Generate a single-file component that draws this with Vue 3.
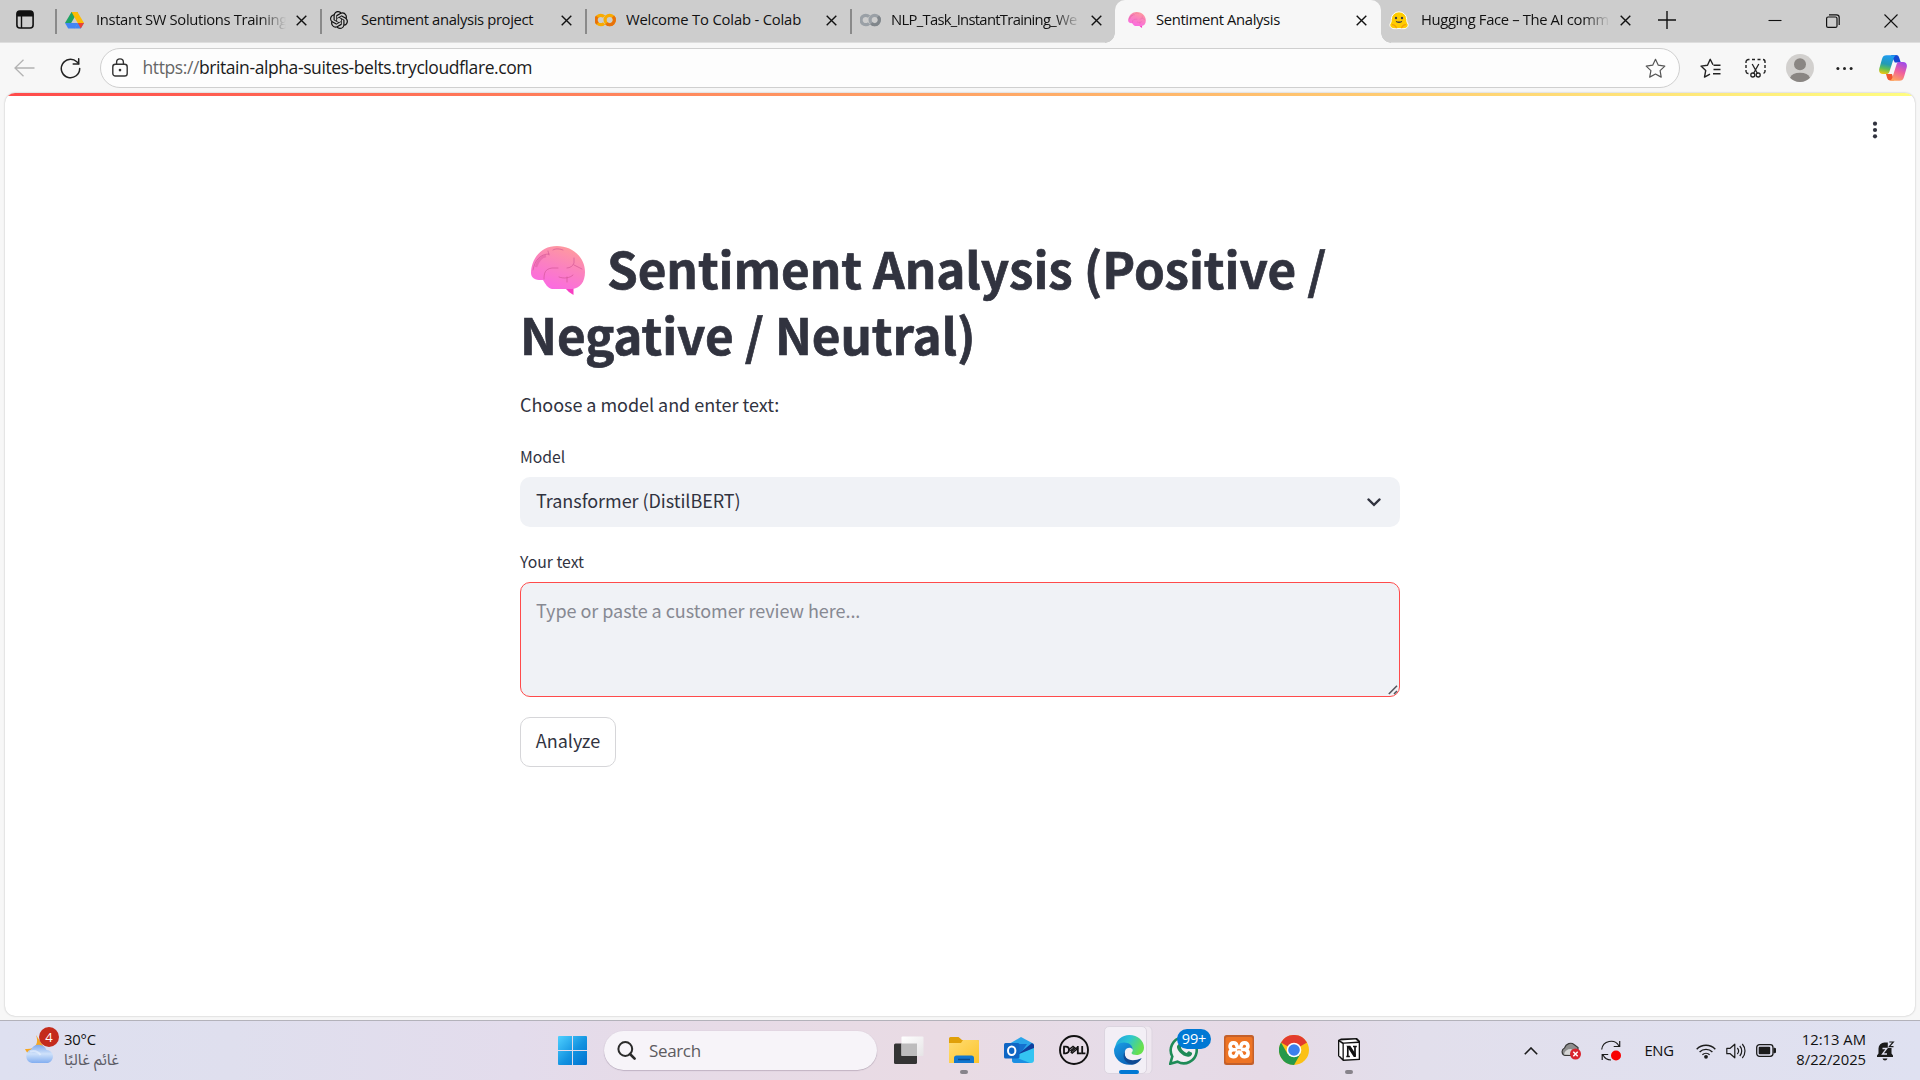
<script setup>
import { ref } from 'vue'

const tabs = [
  { title: 'Instant SW Solutions Training', icon: 'drive', fade: true },
  { title: 'Sentiment analysis project', icon: 'openai' },
  { title: 'Welcome To Colab - Colab', icon: 'colab', wide: true },
  { title: 'NLP_Task_InstantTraining_We', icon: 'colab-grey', fade: true, tight: true },
  { title: 'Sentiment Analysis', icon: 'brain', active: true },
  { title: 'Hugging Face – The AI comm', icon: 'hugging', fade: true },
]

const apps = [
  { icon: 'explorer', dot: true },
  { icon: 'outlook' },
  { icon: 'dell' },
  { icon: 'edge', active: true },
  { icon: 'whatsapp', badge: '99+' },
  { icon: 'xampp' },
  { icon: 'chrome' },
  { icon: 'notion', dot: true },
]

const review = ref('')
</script>

<template>
  <div class="screen">
    <svg class="defs" width="0" height="0" aria-hidden="true">
      <defs>
        <linearGradient id="brainFill" x1="0.75" y1="0" x2="0.3" y2="1">
          <stop offset="0" stop-color="#ff9c9b" /><stop offset="0.45" stop-color="#fb83bd" /><stop offset="1" stop-color="#fb68e4" />
        </linearGradient>
        <linearGradient id="winFill" x1="0" y1="0" x2="1" y2="1">
          <stop offset="0" stop-color="#4fd0ff" /><stop offset="0.55" stop-color="#1292e0" /><stop offset="1" stop-color="#0070cf" />
        </linearGradient>
        <linearGradient id="cloudFill" x1="0" y1="0" x2="0" y2="1">
          <stop offset="0" stop-color="#7fa9ec" /><stop offset="0.5" stop-color="#cfe1fa" /><stop offset="1" stop-color="#82aef0" />
        </linearGradient>
        <linearGradient id="folderFill" x1="0" y1="0" x2="1" y2="1">
          <stop offset="0" stop-color="#ffdc72" /><stop offset="1" stop-color="#fcc42c" />
        </linearGradient>
        <linearGradient id="edgeTop" x1="0" y1="0" x2="1" y2="0.4">
          <stop offset="0" stop-color="#1f9de0" /><stop offset="0.5" stop-color="#2cc5d2" /><stop offset="1" stop-color="#68e04e" />
        </linearGradient>
        <linearGradient id="edgeLeft" x1="0" y1="0" x2="0.6" y2="1">
          <stop offset="0" stop-color="#1aa0e6" /><stop offset="1" stop-color="#0c63b8" />
        </linearGradient>
        <linearGradient id="cpLeft" x1="0.4" y1="0" x2="0.2" y2="1">
          <stop offset="0" stop-color="#1f9cf0" /><stop offset="0.45" stop-color="#239bb4" /><stop offset="0.7" stop-color="#5fbf56" /><stop offset="1" stop-color="#f7c70e" />
        </linearGradient>
        <linearGradient id="cpRight" x1="0.7" y1="0" x2="0.3" y2="1">
          <stop offset="0" stop-color="#a14be8" /><stop offset="0.5" stop-color="#f1609c" /><stop offset="1" stop-color="#ffa65c" />
        </linearGradient>
        <linearGradient id="paneFill" x1="0" y1="0" x2="1" y2="1">
          <stop offset="0" stop-color="#ffffff" /><stop offset="1" stop-color="#e6e4e6" />
        </linearGradient>
        <symbol id="i-brain" viewBox="0 0 54 49">
          <path d="M35 42h7.500v7Q37.500 46.500 34 42z" fill="#f83ec2" />
          <path d="M0 27C0 14 9 0 26 0c14 0 28 10 28 26 0 10-5 16.500-13 17H21c-4.500-1-6.500-5-9-9C6 34.500 0 33 0 27z" fill="url(#brainFill)" />
          <g fill="none" stroke="#cf5291" stroke-width="1" stroke-linecap="round" opacity="0.62">
            <path d="M2 24C4 14 9 8 18 8M13 33c0-6 1-10 8-11h6M22 4c3-2 7-1 10 0M36 22c3 0 6-2 7-5v-5M43 19l8 4M28 31c5 2 11 1 14-2M36 31v5M17 5l1 4" />
          </g>
          <path d="M5 21c2-7 5-10 10-11" fill="none" stroke="#d6569c" stroke-width="2.500" opacity="0.45" />
        </symbol>
      </defs>
    </svg>

    <!-- Tab strip -->
    <header class="tabstrip">
      <div class="tab-actions">
        <svg width="18" height="19" viewBox="0 0 18 19"><rect x="0.900" y="1" width="16.200" height="17" rx="3" fill="none" stroke="#111" stroke-width="1.600" /><path d="M1 4a3 3 0 0 1 3-3h10a3 3 0 0 1 3 3v2.500H1z" fill="#111" /><path d="M5.500 6v12" stroke="#111" stroke-width="1.400" /></svg>
      </div>
      <div v-for="t in tabs" :key="t.title" class="tab" :class="{ active: t.active }">
        <span class="favicon">
          <svg v-if="t.icon === 'drive'" width="19" height="17" viewBox="0 0 19 17"><path d="M6.500 0h6L6.200 11H0z" fill="#1ea362" /><path d="M6.500 0h6L9.500 5.300z" fill="#188038" /><path d="M6.500 0h6L19 11h-6.300z" fill="#fbbc04" /><path d="M3.200 16.500 0 11h13l-3.200 5.500z" fill="#4285f4" /><path d="M12.700 11H19l-3.200 5.500H9.500z" fill="#4285f4" /><path d="M12.700 11H19l-3.200 5.500z" fill="#ea4335" /></svg>
          <svg v-else-if="t.icon === 'openai'" width="18" height="18" viewBox="0 0 24 24"><path fill="#111" d="M22.280 9.820a5.980 5.980 0 0 0-.520-4.910 6.050 6.050 0 0 0-6.510-2.900A6.070 6.070 0 0 0 4.980 4.180a5.980 5.980 0 0 0-4 2.900 6.050 6.050 0 0 0 .740 7.100 5.980 5.980 0 0 0 .510 4.910 6.050 6.050 0 0 0 6.510 2.900A5.980 5.980 0 0 0 13.260 24a6.060 6.060 0 0 0 5.770-4.210 5.990 5.990 0 0 0 4-2.900 6.060 6.060 0 0 0-.750-7.070zm-9.020 12.610a4.480 4.480 0 0 1-2.880-1.040l.140-.080 4.780-2.760a.800.800 0 0 0 .390-.680v-6.740l2.020 1.170a.070.070 0 0 1 .040.050v5.580a4.500 4.500 0 0 1-4.490 4.490zm-9.660-4.130a4.470 4.470 0 0 1-.530-3.010l.140.090 4.780 2.760a.770.770 0 0 0 .780 0l5.840-3.370v2.330a.080.080 0 0 1-.030.060L9.740 19.950a4.500 4.500 0 0 1-6.140-1.650zM2.340 7.900a4.490 4.490 0 0 1 2.370-1.970v5.680a.770.770 0 0 0 .390.680l5.810 3.350-2.020 1.170a.080.080 0 0 1-.070 0l-4.830-2.790A4.500 4.500 0 0 1 2.340 7.900zm16.600 3.860-5.840-3.390 2.020-1.160a.080.080 0 0 1 .070 0l4.830 2.790a4.490 4.490 0 0 1-.680 8.100v-5.680a.790.790 0 0 0-.400-.660zm2.010-3.020-.140-.090-4.770-2.780a.780.780 0 0 0-.790 0L9.410 9.230V6.900a.070.070 0 0 1 .030-.060l4.830-2.790a4.500 4.500 0 0 1 6.680 4.690zM8.310 12.860l-2.020-1.160a.080.080 0 0 1-.040-.060V6.070a4.500 4.500 0 0 1 7.380-3.450l-.140.080-4.780 2.760a.800.800 0 0 0-.390.680zm1.100-2.370L12.010 9l2.610 1.500v3l-2.600 1.500-2.610-1.500z" /></svg>
          <svg v-else-if="t.icon === 'colab'" width="21" height="14" viewBox="0 0 21 14"><path d="M9.100 3.700A4.700 4.700 0 1 0 9.100 10.300" fill="none" stroke="#f9ab00" stroke-width="3.200" /><circle cx="14.700" cy="7" r="4.600" fill="none" stroke="#f9ab00" stroke-width="3.200" /><path d="M11.400 10.300A4.600 4.600 0 0 0 18 3.700" fill="none" stroke="#e8710a" stroke-width="3.200" /><path d="M2.500 10.300A4.700 4.700 0 0 1 2.200 3.800" fill="none" stroke="#e8710a" stroke-width="3.200" /></svg>
          <svg v-else-if="t.icon === 'colab-grey'" width="21" height="14" viewBox="0 0 21 14"><path d="M9.100 3.700A4.700 4.700 0 1 0 9.100 10.300" fill="none" stroke="#9aa0a6" stroke-width="3.200" /><circle cx="14.700" cy="7" r="4.600" fill="none" stroke="#9aa0a6" stroke-width="3.200" /><path d="M11.400 10.300A4.600 4.600 0 0 0 18 3.700" fill="none" stroke="#80868b" stroke-width="3.200" /></svg>
          <svg v-else-if="t.icon === 'brain'" width="18" height="16"><use href="#i-brain" /></svg>
          <svg v-else width="20" height="19" viewBox="0 0 20 19"><path d="M2.300 8.500a7.700 7.700 0 0 1 15.400 0c0 2 .3 3 1.300 4.500.7 2-1 4.500-4 4.700-2 .3-3-.2-5-.2s-3 .5-5 .2c-3-.2-4.700-2.700-4-4.700 1-1.500 1.300-2.500 1.300-4.500z" fill="#fc0" stroke="#fff" stroke-width="1" /><path d="M3 14c1-1 4 1 4.500 3M17 14c-1-1-4 1-4.500 3" stroke="#f59e0b" stroke-width="1.300" fill="none" /><circle cx="7" cy="7" r="1.200" fill="#3a3b45" /><circle cx="13" cy="7" r="1.200" fill="#3a3b45" /><path d="M6.800 9.700q3.200 1.700 6.400 0c0 3-6.400 3-6.400 0z" fill="#3a3b45" /></svg>
        </span>
        <span class="tab-title" :class="{ fade: t.fade, wide: t.wide, tight: t.tight }">{{ t.title }}</span>
        <svg class="tab-close" width="11" height="11" viewBox="0 0 11 11"><path d="M0.700.700l9.600 9.600M10.300.700.700 10.300" stroke="#111" stroke-width="1.400" /></svg>
      </div>
      <svg class="new-tab" width="18" height="18" viewBox="0 0 18 18"><path d="M9 0v18M0 9h18" stroke="#111" stroke-width="1.400" /></svg>
      <div class="window-buttons">
        <svg width="14" height="14" viewBox="0 0 14 14"><path d="M0.500 6.500h13" stroke="#111" stroke-width="1.100" /></svg>
        <svg width="14" height="14" viewBox="0 0 14 14"><rect x="0.600" y="3" width="10.400" height="10.400" rx="1.500" fill="none" stroke="#111" stroke-width="1.200" /><path d="M3 .800h7.500a2.700 2.700 0 0 1 2.700 2.700V11" fill="none" stroke="#111" stroke-width="1.200" /></svg>
        <svg width="14" height="14" viewBox="0 0 14 14"><path d="M.5.500l13 13M13.500.500l-13 13" stroke="#111" stroke-width="1.100" /></svg>
      </div>
    </header>

    <!-- Address bar -->
    <nav class="toolbar">
      <svg class="back" width="21" height="18" viewBox="0 0 21 18"><path d="M20.500 9H1M9.500.700 1 9l8.500 8.300" fill="none" stroke="#b3b3b3" stroke-width="1.300" /></svg>
      <svg class="reload" width="21" height="21" viewBox="0 0 21 21"><path d="M19.700 10.500a9.200 9.200 0 1 1-2.900-6.700l1.700 1.700" fill="none" stroke="#222" stroke-width="1.500" stroke-linecap="round" /><path d="M18.700.800v5.200h-5.500" fill="none" stroke="#222" stroke-width="1.500" stroke-linecap="round" /></svg>
      <div class="omnibox">
        <svg class="lock" width="16" height="19" viewBox="0 0 16 19"><rect x="0.800" y="6.300" width="14.400" height="11.700" rx="2.600" fill="none" stroke="#333" stroke-width="1.400" /><path d="M4.600 6V4.300a3.400 3.400 0 0 1 6.800 0V6" fill="none" stroke="#333" stroke-width="1.400" /><circle cx="8" cy="12.100" r="1.300" fill="#333" /></svg>
        <span class="url"><i>https://</i>britain-alpha-suites-belts.trycloudflare.com</span>
        <svg class="star" width="21" height="21" viewBox="0 0 21 21"><path d="M10.500 1.300l2.800 5.900 6.500.9-4.700 4.500 1.100 6.500-5.700-3.100-5.800 3.100 1.200-6.500L1.200 8.100l6.500-.9z" fill="none" stroke="#555" stroke-width="1.200" stroke-linejoin="round" /></svg>
      </div>
      <div class="tools">
        <svg width="21" height="21" viewBox="0 0 21 21"><path d="M13 6.800 10.200 1.300 7.500 7.200 1 8.100l4.700 4.500-1.200 6.500 5.500-3" fill="none" stroke="#222" stroke-width="1.400" stroke-linejoin="round" /><path d="M13.500 7.200h7M13.500 11.500h7M13 15.800h7.500" stroke="#222" stroke-width="1.400" /></svg>
        <svg width="21" height="21" viewBox="0 0 21 21"><path d="M1 5V4a2.500 2.500 0 0 1 2.500-2.500h1M7 1.500h3M12.500 1.500h3M18 1.500a2.300 2.300 0 0 1 2 2.500v1M20 7v3M20 12v1.500a2 2 0 0 1-1.500 1.800M1 7v3M1 12v1.500A2.300 2.300 0 0 0 3.500 15.500" fill="none" stroke="#222" stroke-width="1.400" /><path d="M7.200 6l5.300 9.500M13.800 6l-5.300 9.500" stroke="#222" stroke-width="1.300" /><circle cx="7.800" cy="17" r="2" fill="none" stroke="#222" stroke-width="1.300" /><circle cx="13.200" cy="17" r="2" fill="none" stroke="#222" stroke-width="1.300" /></svg>
        <svg width="28" height="28" viewBox="0 0 28 28"><circle cx="14" cy="14" r="14" fill="#d2d0ce" /><circle cx="14" cy="10.300" r="6" fill="#8a8683" /><path d="M4 23.800a10.400 7 0 0 1 20 0 14 14 0 0 1-20 0z" fill="#8a8683" /></svg>
        <svg width="17" height="5" viewBox="0 0 17 5"><circle cx="1.900" cy="2.500" r="1.500" fill="#222" /><circle cx="8.500" cy="2.500" r="1.500" fill="#222" /><circle cx="15.100" cy="2.500" r="1.500" fill="#222" /></svg>
        <svg width="28" height="26" viewBox="0 0 28 26"><path d="M17 0c2 0 2.700 1 3.300 3l1.500 4.500h-6L12 0z" fill="#1748d2" /><path d="M7 19h6l2 6.500h-3.500c-2 0-3-1-3.500-3z" fill="#f0562f" /><path d="M7.500.300h10C15 1 14.700 3 14 5.500l-3.500 11C9.800 18.500 9 19 7 19H4C1 19-.5 17 .3 13.500L3 4C3.800 1.200 5.200.300 7.500.300z" fill="url(#cpLeft)" /><path d="M20.500 25.700h-10c2.500-.7 2.800-2.700 3.500-5.200l3.500-11c.7-2 1.500-2.500 3.500-2.500h3c3 0 4.500 2 3.700 5.500L25 22c-.8 2.800-2.200 3.700-4.500 3.700z" fill="url(#cpRight)" /></svg>
      </div>
    </nav>

    <!-- Page -->
    <div class="viewport">
      <main class="page">
        <div class="decoration"></div>
        <svg class="kebab" width="6" height="18" viewBox="0 0 6 18"><circle cx="3" cy="2.700" r="2.100" fill="#31333f" /><circle cx="3" cy="9" r="2.100" fill="#31333f" /><circle cx="3" cy="15.300" r="2.100" fill="#31333f" /></svg>
        <section class="content">
          <h1>
            <span class="line line-1"><svg class="brain" width="54" height="49"><use href="#i-brain" /></svg>Sentiment Analysis (Positive /</span>
            <span class="line line-2">Negative / Neutral)</span>
          </h1>
          <p class="intro">Choose a model and enter text:</p>
          <label class="label">Model</label>
          <div class="select">
            <span>Transformer (DistilBERT)</span>
            <svg width="14" height="9" viewBox="0 0 14 9"><path d="M1.400 1.400 7 6.900l5.600-5.500" fill="none" stroke="#31333f" stroke-width="2.200" stroke-linecap="round" /></svg>
          </div>
          <label class="label second">Your text</label>
          <div class="field">
            <textarea v-model="review" placeholder="Type or paste a customer review here..."></textarea>
            <svg class="grip" width="10" height="10" viewBox="0 0 10 10"><path d="M.8 9 9 .8M6 9l3-3" stroke="#55565c" stroke-width="1.600" /></svg>
          </div>
          <button class="analyze">Analyze</button>
        </section>
      </main>
    </div>

    <!-- Taskbar -->
    <footer class="taskbar">
      <div class="weather">
        <div class="weather-icon">
          <svg width="32" height="30" viewBox="0 0 32 30"><path d="M12 1c3 8 0 15-11 14 2 5 6 6 11 5l9-5z" fill="#f5a623" /><path d="M8 29a7 7 0 0 1-1-13.500A8.500 8.500 0 0 1 22.500 16 6.600 6.600 0 0 1 24 29z" fill="url(#cloudFill)" /><path d="M6 17.500q7-2 10.500 3.500" fill="none" stroke="#f2f7ff" stroke-width="2" opacity="0.5" /></svg>
          <span class="count">4</span>
        </div>
        <div class="weather-text"><span class="temp">30°C</span><span class="cond" dir="rtl">غائم غالبًا</span></div>
      </div>

      <svg class="start" width="29" height="29" viewBox="0 0 29 29"><path d="M1 0h13v14H0V1a1 1 0 0 1 1-1zM15 0h13a1 1 0 0 1 1 1v13H15zM0 15h14v14H1a1 1 0 0 1-1-1zM15 15h14v13a1 1 0 0 1-1 1H15z" fill="url(#winFill)" /></svg>
      <div class="search">
        <svg width="19" height="19" viewBox="0 0 19 19"><circle cx="8.300" cy="8" r="6.900" fill="none" stroke="#2b2b2b" stroke-width="2" /><path d="M13 13l4.600 4.600" stroke="#2b2b2b" stroke-width="2.600" stroke-linecap="round" /></svg>
        <span>Search</span>
      </div>
      <svg class="taskview" width="30" height="29" viewBox="0 0 30 29"><rect x="0" y="7.500" width="23" height="20.500" rx="1.500" fill="#343434" /><rect x="7.500" y="0.500" width="22" height="19.500" rx="1" fill="url(#paneFill)" /><rect x="7.500" y="7.500" width="15.500" height="12.500" fill="#bdbcbd" /></svg>

      <div class="apps">
        <div v-for="a in apps" :key="a.icon" class="app" :class="{ active: a.active }">
          <svg v-if="a.icon === 'explorer'" width="30" height="30" viewBox="0 0 30 30"><path d="M0 3.500A1.500 1.500 0 0 1 1.500 2h8L13 5h15.500A1.500 1.500 0 0 1 30 6.500V12H0z" fill="#e0a008" /><path d="M0 8h12l2-3h14.500A1.500 1.500 0 0 1 30 6.500V28H0z" fill="url(#folderFill)" /><path d="M5 28v-5a2.500 2.500 0 0 1 2.500-2.500h15A2.500 2.500 0 0 1 25 23v5z" fill="#1277cf" /><path d="M9 24.500h12" stroke="#0a4b8c" stroke-width="1.500" /></svg>
          <svg v-else-if="a.icon === 'outlook'" width="30" height="30" viewBox="0 0 30 30"><path d="M5 9 17 2l13 7v4L10 22z" fill="#2aa5ea" /><path d="M8 9h15l-9 13H8z" fill="#1470cf" /><path d="M12 21 28 8l2 2v7L14 26z" fill="#123f9c" /><path d="M8 22 30 13v12a3 3 0 0 1-3 3H11a3 3 0 0 1-3-3z" fill="#34c4f2" /><path d="M8 21l18 7H11a3 3 0 0 1-3-3z" fill="#1b8ee2" /><rect x="0" y="8" width="15.500" height="15.500" rx="1.500" fill="#0f66c4" /><ellipse cx="7.700" cy="15.700" rx="3.700" ry="4.300" fill="none" stroke="#fff" stroke-width="2" /></svg>
          <svg v-else-if="a.icon === 'dell'" width="30" height="30" viewBox="0 0 30 30"><circle cx="15" cy="15" r="14" fill="none" stroke="#111" stroke-width="1.900" /><g fill="none" stroke="#111" stroke-width="1.800"><path d="M5 11.700v6.600M4.200 11.700h2.600c4.300 0 4.300 6.600 0 6.600H4.200M18.800 11v7.300h3.400M23.200 11v7.300h3.200" /><path d="M9.500 15l4.500-3.600 1.500 1.200-3.800 3 1 .9 4.600-3.700 1.200 1-5.300 4.300-1.500-1.200" stroke-width="1.300" /></g></svg>
          <svg v-else-if="a.icon === 'edge'" width="30" height="30" viewBox="0 0 30 30"><path d="M1 13C2 5 8 0 15.300 0 24 0 30 6 30 12.500c0 5-3.800 7.500-7.500 7.500-3 0-5-1-5-2 0-.8 1.300-1 1.300-3.300C18.800 11 14 8 10 8c-4 0-7 2-9 5z" fill="url(#edgeTop)" /><path d="M0 15.500C.2 10.500 5 7.500 10 7.500c5 0 9 3 8.800 7.300C17 11.500 12 12.500 11 16c-1.500 6 3 12.500 9 13.200C10 32 0 25 0 15.500z" fill="url(#edgeLeft)" /><path d="M11 16c-2 8 6 12 16.800 7C26 26 23 29 19 29.500 12 29 7 23 11 16z" fill="#104a93" /></svg>
          <svg v-else-if="a.icon === 'whatsapp'" width="30" height="30" viewBox="0 0 30 30"><path d="M1.300 28.700l2-7.200A13 13 0 1 1 8.500 26.700z" fill="#f3eef3" stroke="#1f8b57" stroke-width="2.600" /><path d="M10 8.500c1.500-1 2-.5 2.800 1.500.5 1.300-1 2-.8 2.800 1 2.500 3 4 5.500 5.200.8 0 1.500-2 2.500-1.700l3 1.500c.5 2.500-2 4-4 4C13 21.500 7 14 8 11z" fill="#1f8b57" /></svg>
          <svg v-else-if="a.icon === 'xampp'" width="30" height="30" viewBox="0 0 30 30"><rect width="30" height="30" rx="2.500" fill="#c4602a" /><rect x="1.500" y="2" width="27" height="26" rx="2" fill="#ee7424" /><path d="M8.500 14.500A3.400 3.400 0 1 1 12.800 10.500Q13 12.500 15 12.500T17.200 10.500A3.400 3.400 0 1 1 21.500 14.500H18.500M21.500 14.800A3.500 3.500 0 1 1 17.200 19Q17 17 15 17T12.800 19A3.500 3.500 0 1 1 8.500 14.800H11.500" fill="none" stroke="#fff" stroke-width="3.600" stroke-linejoin="round" stroke-linecap="round" /></svg>
          <svg v-else-if="a.icon === 'chrome'" width="30" height="30" viewBox="0 0 30 30"><circle cx="15" cy="15" r="15" fill="#fbc116" /><path d="M15 15 2 7.500A15 15 0 0 1 28 7.500z" fill="#e33b2e" /><path d="M2 7.500A15 15 0 0 0 15 30l6.500-11.300L15 15 8.500 18.700z" fill="#26994a" /><circle cx="15" cy="15" r="7.300" fill="#fff" /><circle cx="15" cy="15" r="5.800" fill="#3c7fee" /></svg>
          <svg v-else width="30" height="30" viewBox="0 0 30 30"><path d="M4 5l3-1.500L23 3l3 3v19l-17 1-5-5z" fill="#111" /><path d="M6 5.500 21.500 4.500l2.500 2L9.500 7.500z" fill="#fff" /><path d="M5.300 6.800 8.500 9v14.500l-3.200-3.200z" fill="#fff" /><path d="M9.800 8.800 24.700 8v15.800l-14.900.8z" fill="#fff" /><path d="M13.800 11.500v10M12.300 21.500h3.600M21 11.500v10M19 11.500h3.800" stroke="#111" stroke-width="1.700" fill="none" /><path d="M12.300 10.800h4l5.500 8.500v2.700h-2L14 13z" fill="#111" /></svg>
          <span v-if="a.badge" class="badge">{{ a.badge }}</span>
          <i v-if="a.dot || a.active" class="mark"></i>
        </div>
      </div>

      <div class="tray">
        <svg class="tr-up" width="14" height="8" viewBox="0 0 14 8"><path d="M.8 7.200 7 1l6.200 6.200" fill="none" stroke="#1b1b1b" stroke-width="1.600" /></svg>
        <svg class="tr-cloud" width="21" height="18" viewBox="0 0 21 18"><path d="M4 13.500a4 4 0 0 1-.5-7.500C5 1.500 10 0 13 2.500l4 3v4L11 13.500z" fill="#8d8d8d" stroke="#3a3a3a" stroke-width="1.200" /><path d="M3 12.500q1-5.500 7-5.500l3 2-2 4z" fill="#d6d6d6" /><circle cx="14.500" cy="12" r="5.500" fill="#d9232e" /><path d="M12.300 9.800l4.400 4.400M16.700 9.800l-4.400 4.400" stroke="#fff" stroke-width="1.500" /></svg>
        <svg class="tr-sync" width="20" height="21" viewBox="0 0 20 21"><path d="M.7 9.500A9.300 9.300 0 0 1 18 6M18.700 1v5.500h-6M10 20a9.300 9.300 0 0 1-8-5M1.200 20v-5.500h6" fill="none" stroke="#1b1b1b" stroke-width="1.200" /><circle cx="15" cy="15.500" r="5" fill="#f80000" /></svg>
        <span class="lang">ENG</span>
        <svg class="tr-wifi" width="20" height="16" viewBox="0 0 20 16"><path d="M.7 6.200a13 13 0 0 1 18.600 0M3.600 9a9 9 0 0 1 12.800 0M6.400 11.800a5.200 5.200 0 0 1 7.200 0" fill="none" stroke="#1b1b1b" stroke-width="1.400" /><circle cx="10" cy="13.800" r="1.900" fill="#1b1b1b" /></svg>
        <svg class="tr-sound" width="21" height="16" viewBox="0 0 21 16"><path d="M.8 5.300h3.400L8.800 1.200v13.600l-4.600-4.100H.8z" fill="none" stroke="#1b1b1b" stroke-width="1.200" stroke-linejoin="round" /><path d="M11.300 5a4.500 4.500 0 0 1 0 6M13.800 3a7.500 7.500 0 0 1 0 10M16.300 1a10.500 10.500 0 0 1 0 14" fill="none" stroke="#1b1b1b" stroke-width="1.200" /></svg>
        <svg class="tr-bat" width="20" height="13" viewBox="0 0 20 13"><rect x="0.700" y="0.700" width="16.300" height="11.600" rx="2.800" fill="none" stroke="#1b1b1b" stroke-width="1.300" /><rect x="2.700" y="2.700" width="11.500" height="7.600" rx="1" fill="#1b1b1b" /><path d="M18 4v5l2-1V5z" fill="#1b1b1b" stroke="#1b1b1b" /></svg>
        <div class="clock"><span class="time">12:13 AM</span><span class="date">8/22/2025</span></div>
        <svg class="tr-bell" width="18" height="20" viewBox="0 0 18 20"><path d="M0 16v-1.500l1.500-2V7.500A6 6 0 0 1 7.500 1.500h3.300V7h3.700v5.500l1.500 2V16zM5.500 17.500h5a2.600 2.600 0 0 1-5 0z" fill="#1b1b1b" /><path d="M5.500 7.500h4.300l-4.300 5.500h4.500" fill="none" stroke="#e0e0f0" stroke-width="1.300" /><path d="M12.300 1H16.300l-4 4.700h4.200" fill="none" stroke="#1b1b1b" stroke-width="1.200" /></svg>
      </div>
    </footer>
  </div>
</template>

<style>
html, body { margin: 0; background: #f7f7f7; overflow: hidden; }
</style>

<style scoped>
.screen { width: 1920px; height: 1080px; display: flex; flex-direction: column; overflow: hidden; background: #f7f7f7; font-family: "Open Sans", "Noto Sans", sans-serif; color: #111; }
.screen svg { display: block; flex: none; }
.screen .defs { position: absolute; }

.tabstrip { height: 42px; background: #cdcdcd; border-bottom: 1px solid #dedede; display: flex; box-sizing: content-box; }
.tab-actions { width: 55px; padding: 10px 0 0 16px; box-sizing: border-box; }
.tab { position: relative; width: 265px; height: 42px; box-sizing: border-box; border-left: 1px solid transparent; padding: 0 13px 2px 9px; display: flex; align-items: center; flex: none; }
.tab::before { content: ""; position: absolute; left: -1px; top: 9px; width: 1.500px; height: 25px; background: #8a8a8a; }
.tab.active { width: 266px; background: #f7f7f7; border-radius: 10px 10px 0 0; height: 43px; padding: 0 14px 3px 12px; z-index: 1; }
.tab.active::before { left: -11px; top: 33px; width: 10px; height: 10px; background: radial-gradient(circle at 0 0, #cdcdcd 9.500px, #f7f7f7 10px); }
.tab.active::after { content: ""; position: absolute; right: -10px; top: 33px; width: 10px; height: 10px; background: radial-gradient(circle at 100% 0, #cdcdcd 9.500px, #f7f7f7 10px); }
.tab.active + .tab::before { display: none; }
.tab.active + .tab { width: 264px; padding-left: 7px; padding-right: 14px; }
.tab.active + .tab .favicon { width: 32px; }
.favicon { width: 31px; flex: none; }
.tab.active .favicon { width: 28px; }
.tab-title { flex: 1; font-size: 14.800px; line-height: 22px; white-space: nowrap; overflow: hidden; letter-spacing: -0.360px; margin-right: 10px; margin-top: -1.500px; }
.tab-title.wide { letter-spacing: -0.180px; }
.tab-title.tight { letter-spacing: -0.700px; }
.fade { mask-image: linear-gradient(90deg, #000 86%, transparent 100%); }
.new-tab { margin: 10.500px 0 0 13px; }
.window-buttons { display: flex; gap: 44px; margin: 14px 22px 0 auto; }

.toolbar { height: 50px; display: flex; align-items: center; padding-left: 14px; }
.reload { margin-left: 24.500px; }
.omnibox { margin-left: 19.500px; width: 1580px; height: 40px; box-sizing: border-box; border: 1px solid #cfcfcf; border-radius: 20px; background: #fdfdfd; display: flex; align-items: center; padding: 0 13px 0 11px; }
.lock { margin-top: -2px; }
.url { flex: 1; margin: -1.500px 0 0 14.500px; font-size: 17.500px; line-height: 26px; letter-spacing: -0.410px; color: #1b1b1b; }
.url i { font-style: normal; color: #666; }
.tools { display: flex; align-items: center; flex: 1; padding-left: 19.500px; }
.tools svg:nth-child(2) { margin-left: 24px; }
.tools svg:nth-child(3) { margin-left: 20px; }
.tools svg:nth-child(4) { margin-left: 22.500px; }
.tools svg:nth-child(5) { margin-left: 25.500px; }

.viewport { height: 927px; padding: 0 5px 4px; box-sizing: border-box; }
.page { position: relative; height: 923px; background: #fff; border-radius: 10px; overflow: hidden; box-shadow: 0 0 2px rgba(0, 0, 0, 0.28); font-family: "Noto Sans CJK SC", sans-serif; color: #31333f; }
.decoration { height: 3px; background: linear-gradient(90deg, #ff4b4b, #fffd80); }
.kebab { position: absolute; right: 37px; top: 28px; }
.content { width: 880px; margin: 139px auto 0; display: flex; flex-direction: column; align-items: flex-start; }
h1 { margin: 0; font-size: 49.400px; line-height: 66px; font-weight: 700; letter-spacing: -0.090px; -webkit-text-stroke: 0.700px #31333f; }
.line { display: flex; align-items: center; white-space: nowrap; }
.brain { margin: 4px 22px 0 11px; }
.intro { margin: 22px 0 0; font-size: 18px; line-height: 30px; letter-spacing: -0.040px; }
.label { margin-top: 27px; font-size: 15.750px; line-height: 22px; }
.label.second { margin-top: 24px; }
.select { margin-top: 9px; width: 880px; height: 50px; box-sizing: border-box; border-radius: 10px; background: #f0f2f6; padding: 0 19px 5px 16px; display: flex; align-items: center; justify-content: space-between; font-size: 18px; letter-spacing: -0.050px; }
.select svg { margin-top: 6px; }
.field { position: relative; margin-top: 9px; width: 880px; height: 115px; }
textarea { display: block; width: 880px; height: 115px; box-sizing: border-box; border: 1px solid #ff4b4b; border-radius: 10px; background: #f0f2f6; padding: 12px 15px; margin: 0; font: 18px/30px "Noto Sans CJK SC", sans-serif; letter-spacing: -0.040px; color: #31333f; outline: none; resize: none; }
textarea::placeholder { color: #878992; opacity: 1; }
.grip { position: absolute; right: 2px; bottom: 2px; }
.analyze { margin-top: 20px; width: 96px; height: 50px; box-sizing: border-box; border: 1px solid #d6d6d9; border-radius: 10px; background: #fff; color: #31333f; font: 18px/30px "Noto Sans CJK SC", sans-serif; padding: 0 0 5px; }

.taskbar { height: 60px; box-sizing: border-box; border-top: 1px solid #b3b2ba; display: flex; align-items: center; background: linear-gradient(90deg, #dee0f0 0, #dfdfee 12%, #e3dcec 27%, #e6dbe8 33%, #e9dbe4 49%, #e6dce8 58%, #e6dae6 66%, #e2dfec 74%, #dfe1f1 100%); }
.weather { width: 558px; display: flex; padding-left: 24px; box-sizing: border-box; }
.weather-icon { position: relative; width: 40px; height: 36px; padding-top: 3px; }
.count { position: absolute; left: 15px; top: -4px; width: 20px; height: 20px; border-radius: 50%; background: #c42b1c; color: #fff; font-size: 13px; line-height: 20px; text-align: center; }
.weather-text { display: flex; flex-direction: column; align-items: flex-start; font-size: 14.800px; line-height: 20px; margin-top: -2px; }
.temp { letter-spacing: -0.200px; }
.cond { font-family: "Noto Sans Arabic", "DejaVu Sans", sans-serif; color: #5c5c66; font-size: 15.400px; line-height: 20px; padding-top: 1px; white-space: nowrap; }
.search { margin-left: 17px; width: 273px; height: 39px; box-sizing: border-box; border-radius: 20px; background: #f7f4f9; box-shadow: 0 0.500px 1px rgba(80, 60, 90, 0.45); display: flex; align-items: center; padding-left: 13px; }
.search span { margin-left: 13px; font-size: 17px; line-height: 24px; color: #5d5b60; letter-spacing: -0.350px; }
.taskview { margin-left: 17px; }
.apps { margin-left: 12px; display: flex; }
.app { position: relative; width: 55px; height: 59px; display: flex; align-items: center; justify-content: center; padding-bottom: 1px; box-sizing: border-box; }
.app svg { position: relative; }
.app.active::before { content: ""; position: absolute; left: 3px; top: 5px; width: 43px; height: 48px; box-sizing: border-box; border-radius: 5px; background: #f3eff6; border: 1px solid #dcd5e0; box-shadow: 5px 0 0 -0.500px #efe8f0, 5.500px 0 0 0 #dcd5e0; }
.mark { position: absolute; left: 23.500px; bottom: 6px; width: 8px; height: 4px; border-radius: 2px; background: #87838b; }
.active .mark { left: 17.500px; width: 20px; background: #0078d4; }
.badge { position: absolute; left: 21px; top: 8px; width: 34px; height: 20px; border-radius: 10px; background: #0078d4; color: #fff; font-size: 14.500px; line-height: 20px; text-align: center; letter-spacing: -0.200px; }

.tray { display: flex; align-items: center; flex: 1; margin-left: 148px; }
.tr-cloud { margin-left: 22.500px; }
.tr-sync { margin-left: 19.500px; }
.lang { margin: -1.500px 0 0 23.500px; width: 51.500px; font-size: 14.800px; letter-spacing: -0.350px; }
.tr-sound { margin-left: 10px; }
.tr-bat { margin-left: 9px; }
.clock { width: 90px; display: flex; flex-direction: column; align-items: flex-end; font-size: 14.800px; line-height: 20px; margin-top: -3px; }
.time { letter-spacing: 0; }
.date { letter-spacing: -0.050px; }
.tr-bell { margin-left: 10.500px; }
</style>
